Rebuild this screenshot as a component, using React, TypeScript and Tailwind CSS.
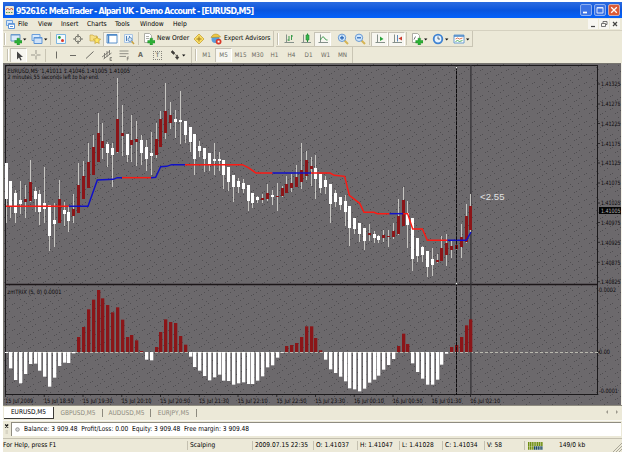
import type { ReactNode } from "react"
import clsx from "clsx"

// [high, body top, body bottom, low, 1 = up bar], in thirds of a pixel below y = 60
const candles = [
    [310, 310, 418, 490, 0], [362, 362, 438, 473, 0], [390, 400, 458, 488, 0], [362, 420, 432, 463, 0],
    [375, 417, 427, 475, 1], [300, 365, 423, 426, 1], [380, 393, 416, 455, 0], [390, 403, 456, 496, 0],
    [322, 430, 447, 490, 0], [435, 435, 527, 574, 0], [428, 480, 492, 560, 0], [360, 417, 488, 488, 1],
    [427, 450, 461, 498, 0], [437, 456, 482, 517, 0], [403, 447, 468, 490, 1], [308, 375, 460, 460, 1],
    [303, 348, 418, 418, 1], [250, 305, 384, 384, 1], [226, 262, 345, 345, 1], [158, 219, 305, 305, 1],
    [190, 244, 263, 297, 1], [247, 252, 280, 320, 0], [250, 264, 284, 380, 0], [53, 177, 276, 278, 1],
    [136, 218, 228, 287, 1], [222, 222, 285, 306, 0], [165, 240, 255, 306, 1], [182, 237, 247, 317, 1],
    [225, 241, 278, 316, 0], [240, 260, 296, 332, 0], [215, 278, 288, 344, 0], [190, 236, 285, 295, 1],
    [153, 178, 261, 261, 1], [68, 153, 219, 238, 1], [126, 165, 188, 206, 1], [150, 176, 187, 235, 0],
    [93, 180, 187, 251, 0], [184, 184, 224, 248, 0], [202, 202, 245, 275, 0], [221, 221, 297, 346, 0],
    [243, 258, 273, 291, 0], [264, 264, 297, 335, 0], [280, 280, 313, 332, 0], [248, 296, 302, 345, 0],
    [276, 298, 303, 332, 0], [300, 300, 345, 386, 0], [320, 320, 366, 392, 0], [344, 344, 381, 425, 0],
    [355, 362, 381, 400, 0], [358, 370, 386, 400, 0], [376, 376, 422, 452, 0], [398, 398, 428, 445, 0],
    [408, 412, 420, 430, 0], [403, 413, 419, 428, 1], [373, 399, 417, 422, 1], [390, 406, 412, 434, 0],
    [370, 407, 411, 453, 1], [378, 384, 409, 410, 1], [347, 372, 398, 400, 1], [342, 370, 384, 395, 1],
    [316, 351, 381, 382, 1], [250, 330, 366, 386, 1], [274, 300, 348, 360, 1], [291, 319, 327, 378, 1],
    [286, 323, 356, 417, 0], [342, 342, 384, 398, 0], [347, 360, 381, 403, 0], [371, 371, 431, 488, 0],
    [390, 400, 426, 440, 0], [410, 412, 434, 450, 0], [405, 423, 457, 498, 0], [439, 439, 504, 557, 0],
    [473, 473, 508, 523, 0], [489, 489, 522, 545, 0], [504, 504, 543, 570, 0], [492, 519, 525, 542, 1],
    [513, 522, 534, 550, 0], [525, 528, 540, 548, 0], [511, 525, 534, 545, 1], [510, 527, 530, 560, 1],
    [490, 513, 530, 536, 1], [417, 468, 522, 524, 1], [382, 421, 497, 497, 1], [423, 460, 494, 563, 0],
    [474, 474, 596, 632, 0], [534, 534, 588, 606, 0], [558, 560, 585, 605, 0], [573, 573, 620, 652, 0],
    [565, 597, 615, 648, 0], [581, 600, 606, 609, 1], [528, 564, 603, 604, 1], [521, 550, 584, 619, 1],
    [543, 558, 570, 594, 1], [540, 554, 566, 579, 1], [492, 531, 560, 594, 1], [433, 468, 545, 550, 1],
    [403, 438, 510, 516, 1],
]

const trix = [
    -3, -49, -84, -94, -66, -36, -35, -56, -74, -104, -77, -42, -32, -33, -4, 45, 75, 128, 157, 186,
    161, 141, 119, 134, 97, 45, 51, 35, 3, -23, -25, 15, 60, 98, 90, 87, 48, 22, -14, -45,
    -56, -72, -85, -76, -68, -86, -87, -98, -94, -91, -96, -96, -86, -73, -46, -40, -17, -2, 18, 21,
    27, 45, 77, 77, 42, 5, -23, -52, -63, -74, -88, -109, -112, -118, -110, -92, -83, -71, -53, -39,
    -21, 18, 55, 24, -34, -60, -80, -98, -98, -83, -38, -5, 15, 21, 45, 80, 98,
]

const trend = [
    { color: "#1010c8", points: "206,439 264,439 292,360 340,358 352,353 366,353" },
    { color: "#1010c8", points: "453,353 467,352 482,320 500,319 515,314 555,314" },
    { color: "#1010c8", points: "817,339 933,339" },
    { color: "#1010c8", points: "1168,461 1210,461" },
    { color: "#1010c8", points: "1342,541 1399,541 1413,516" },
    { color: "#fb1a14", points: "18,439 206,439" },
    { color: "#fb1a14", points: "366,353 453,353" },
    { color: "#fb1a14", points: "555,314 727,314 745,323 768,339 817,339" },
    { color: "#fb1a14", points: "933,339 990,339 1003,346 1034,349 1048,406 1079,430 1092,457 1122,457 1132,461 1168,461" },
    { color: "#fb1a14", points: "1210,461 1223,461 1238,507 1267,507 1282,541 1342,541" },
]

const prices = [
    ["1.41325", 84], ["1.41275", 104], ["1.41225", 123.5], ["1.41175", 143.5], ["1.41125", 163], ["1.41075", 183],
    ["1.41025", 203], ["1.40975", 222.5], ["1.40925", 242.3], ["1.40875", 262.3], ["1.40825", 281.7],
] as const

const times = [
    "15 Jul 2009", "15 Jul 18:50", "15 Jul 19:30", "15 Jul 20:10", "15 Jul 20:50", "15 Jul 21:30", "15 Jul 22:10",
    "15 Jul 22:50", "15 Jul 23:30", "16 Jul 00:10", "16 Jul 00:50", "16 Jul 01:30", "16 Jul 02:10",
]

const dots = [
    [2, 10], [4, 9], [7, 7], [12, 5], [14, 4], [9, 12], [17, 9], [19, 8], [22, 6], [24, 2], [6, 1], [20, 0], [0, 4],
]

const barX = (i: number) => 6 + i * 4.843

type LabelProps = { x: number, y: number, width: number, size?: number, fill?: string, children: ReactNode }

function Label({ x, y, width, size = 6, fill, children }: LabelProps) {
    return <text x={x} y={y} textLength={width} lengthAdjust="spacingAndGlyphs" fontSize={size} fill={fill}>{children}</text>
}

function Chart() {
    return (
        <svg width="619" height="342" viewBox="3 63 619 342" className="block shrink-0" fontFamily="'DejaVu Sans Condensed', 'DejaVu Sans', sans-serif">
            <defs>
                <pattern id="grain" width="26" height="13" patternUnits="userSpaceOnUse">
                    <rect width="26" height="13" fill="#6c696c" />
                    {dots.map(([x, y]) => <rect key={`${x}-${y}`} x={x} y={y} width="1" height="1" fill="#504e51" />)}
                </pattern>
            </defs>
            <rect x="3" y="63" width="618" height="342" fill="#9a988f" />
            <rect x="4" y="64" width="617" height="341" fill="url(#grain)" />
            <rect x="621" y="63" width="1" height="342" fill="#f4f2e8" />
            <path d="M3 63.5H621M3.5 63V405" stroke="#77756f" />
            <path d="M5 65.5H598M5.5 65V395M597.5 65V395M5 394.5H598" stroke="#1c1a1c" fill="none" />
            <path d="M5 284.6H598" stroke="#1c1719" strokeWidth="1.5" />

            <path d="M5 352.5H598" stroke="#b9b8ae" strokeDasharray="3 2" />
            <path d="M470.9 65V395" stroke="#353336" strokeWidth="1.3" />

            <g shapeRendering="crispEdges">
                {candles.map(([high, top, bottom, low, up], i) => (
                    <g key={i}>
                        <rect x={Math.round(barX(i) - 0.5)} y={60 + high / 3} width="1" height={(low - high) / 3} fill="#c6c5c1" />
                        <rect x={Math.round(barX(i) - 1.5)} y={60 + top / 3} width="3" height={Math.max(1, (bottom - top) / 3)} fill={up ? "#8b1518" : "#ffffff"} />
                    </g>
                ))}
            </g>

            <g>
                {trix.map((v, i) => (
                    <rect key={i} x={Math.round(barX(i) - 1.5)} y={v > 0 ? 352 - v / 3 : 352} width="3.3" height={Math.abs(v) / 3} fill={v > 0 ? "#8b1518" : "#ffffff"} />
                ))}
            </g>

            <g transform="translate(0 60) scale(0.33333)" fill="none" strokeWidth="4.4">
                {trend.map((t) => <polyline key={t.points} points={t.points} stroke={t.color} />)}
            </g>

            <path d="M456.5 66V395" stroke="#0c0a0c" strokeDasharray="4 0.6" />
            <path d="M455.5 66.5h2v2h-2zM455.5 282.5h2v2h-2z" fill="#ffffff" stroke="#222" strokeWidth="0.5" />

            <text x="480" y="199.8" fontSize="9.5" fontFamily="'Liberation Sans', sans-serif" fill="#e2e2e2" textLength="24.5">&lt;2.55</text>

            <g fill="#0d0b0d">
                <Label x={7.5} y={73} width={122.5}>EURUSD,M5&nbsp; 1.41011 1.41046 1.41005 1.41005</Label>
                <Label x={7.5} y={79.2} width={90.5}>2 minutes 55 seconds left to bar end</Label>
                <Label x={7.5} y={293.8} width={54}>zmTRIX (5, 0) 0.0001</Label>
                {prices.map(([label, y]) => (
                    <g key={label}>
                        <path d={`M598 ${y}h2`} stroke="#1c1a1c" strokeWidth="0.8" />
                        <Label x={601} y={y + 2.2} width={19.5}>{label}</Label>
                    </g>
                ))}
                <rect x="599" y="207" width="22" height="7" fill="#050505" />
                <Label x={601} y={212.8} width={19.5} fill="#b5b3b5">1.41005</Label>
                <Label x={599} y={292.3} width={17}>0.0002</Label>
                <path d="M598 352h2" stroke="#111" />
                <Label x={599} y={354.2} width={11}>0.00</Label>
                <Label x={599} y={393} width={19}>-0.0001</Label>
                {times.map((label, i) => (
                    <g key={label}>
                        <path d={`M${5.5 + i * 38.75} 394v3`} stroke="#1c1a1c" strokeWidth="0.8" />
                        <Label x={5.2 + i * 38.75} y={402.5} width={i ? 30 : 28}>{label}</Label>
                    </g>
                ))}
            </g>
        </svg>
    )
}

function Icon({ children }: { children: ReactNode }) {
    return <svg width="12" height="12" viewBox="0 0 12 12" fill="none" className="shrink-0">{children}</svg>
}

function Slot({ pressed, children }: { pressed?: boolean, children: ReactNode }) {
    return (
        <div className={clsx("flex h-[14px] w-[17px] shrink-0 items-center justify-center", pressed && "border-x border-t border-[#c6c3b6] border-r-white bg-[#f7f6f0]")}>
            {children}
        </div>
    )
}

function Arrow() {
    return <svg width="5" height="12" viewBox="0 0 5 12" className="shrink-0"><path d="M1 5.5h3.4L2.7 7.6z" fill="#111" /></svg>
}

function Sep() {
    return <div className="mx-px h-[13px] w-px shrink-0 bg-[#c9c5b4]" />
}

function Grip() {
    return <div className="mx-px h-[12px] w-[2px] shrink-0 border-l border-[#c4c0b0] bg-white" />
}

function Plus() {
    return <path d="M7 5.2h2.6V7.5H12v2.6H9.600V12H7v-1.9H4.700V7.5H7z" fill="#2cb035" stroke="#1b8424" strokeWidth="0.4" />
}

function Axes() {
    return <path d="M3.5 1.5V9.5M1.5 9.5H11" stroke="#85908a" />
}

function Lens({ minus }: { minus?: boolean }) {
    return (
        <Icon>
            <path d="M7.5 7.5l3.5 3.5" stroke="#d6b453" strokeWidth="2" />
            <circle cx="5" cy="4.8" r="3.7" fill="#cfe6fb" stroke="#6a9ad2" />
            <path d={minus ? "M3 4.8h4" : "M3 4.8h4M5 2.8v4"} stroke="#2463b5" strokeWidth="1.2" />
        </Icon>
    )
}

function TitleBar() {
    return (
        <div className="flex h-4 shrink-0 items-center bg-gradient-to-b from-[#2a6be0] via-[#0a55dd] to-[#0462fb] pl-[2px] pr-[2px]">
            <svg width="9" height="9" viewBox="0 0 9 9" className="shrink-0">
                <rect width="9" height="9" rx="1" fill="#efe7d4" />
                <path d="M1 4l1.5-2L4.5 4l2-2L8 4" stroke="#cf4a35" fill="none" />
                <path d="M1 6.5h7" stroke="#4d9b5b" strokeDasharray="1.5 1" />
            </svg>
            <svg width="242" height="14" className="ml-[2px] shrink-0">
                <text x="0" y="10.6" textLength="238" fontSize="8.8" fontWeight="700" fill="#fff" fontFamily="'DejaVu Sans Condensed', 'DejaVu Sans', sans-serif">952616: MetaTrader - Alpari UK - Demo Account - [EURUSD,M5]</text>
            </svg>
            <div className="ml-auto flex gap-[2px]">
                <svg width="12" height="12" viewBox="0 0 12 12"><rect x="0.5" y="0.5" width="11" height="11" rx="1.5" fill="#3c73e4" stroke="#b9cdf5" strokeWidth="0.7" /><path d="M3 8.5h4" stroke="#fff" strokeWidth="1.7" /></svg>
                <svg width="12" height="12" viewBox="0 0 12 12"><rect x="0.5" y="0.5" width="11" height="11" rx="1.5" fill="#3c73e4" stroke="#b9cdf5" strokeWidth="0.7" /><path d="M3 3.5h6v5.5H3zM3 4h6" fill="none" stroke="#dfe9fc" /></svg>
                <svg width="12" height="12" viewBox="0 0 12 12"><rect x="0.5" y="0.5" width="11" height="11" rx="1.5" fill="#dd5a35" stroke="#f3cfc1" strokeWidth="0.7" /><path d="M3.2 3.2l5.6 5.6M8.8 3.2L3.2 8.8" stroke="#fff" strokeWidth="1.3" /></svg>
            </div>
        </div>
    )
}

function MenuBar() {
    return (
        <div className="flex h-[13px] shrink-0 items-center border-b border-[#d5d1c0] pl-[3px] text-[6.7px]">
            <svg width="9" height="9" viewBox="0 0 9 9" className="shrink-0">
                <path d="M0.5 0.5h6v5h-6z" fill="#d7e8fb" stroke="#6ea0dc" />
                <path d="M2.5 3.5h6v5h-6z" fill="#fff" stroke="#5f95d8" />
                <path d="M2.5 4.3h6M4 6.5h3" stroke="#5f95d8" />
            </svg>
            <span className="ml-[3px] w-5">File</span>
            <span className="w-[23px]">View</span>
            <span className="w-[26px]">Insert</span>
            <span className="w-7">Charts</span>
            <span className="w-[25px]">Tools</span>
            <span className="w-[33px]">Window</span>
            <span>Help</span>
            <div className="ml-auto mr-[2px] flex gap-px">
                <svg width="10" height="10" viewBox="0 0 10 10"><rect width="10" height="10" fill="#f7f6f1" /><path d="M3 7.5h4" stroke="#444" strokeWidth="1.2" /></svg>
                <svg width="10" height="10" viewBox="0 0 10 10"><rect width="10" height="10" fill="#f7f6f1" /><path d="M4 4V2.5h4v3H6.8M2.5 4.5h4v3h-4z" stroke="#555" fill="none" strokeWidth="0.8" /></svg>
                <svg width="10" height="10" viewBox="0 0 10 10"><rect width="10" height="10" fill="#f7f6f1" /><path d="M3 3l4 4M7 3L3 7" stroke="#444" strokeWidth="1.2" /></svg>
            </div>
        </div>
    )
}

function MainToolbar() {
    return (
        <div className="flex h-4 shrink-0 items-center">
            <div className="flex h-full items-center border-b border-r border-[#c9c5b4] text-[6.7px]">
                <Grip />
                <div className="flex w-[21px] items-center pl-[3px]">
                    <Icon><path d="M1 1.5h9v6.500H1z" fill="#dcebfa" stroke="#6b9acb" /><path d="M1 2h9" stroke="#6b9acb" /><Plus /></Icon>
                    <Arrow />
                </div>
                <div className="flex w-[21px] items-center pl-[3px]">
                    <Icon><path d="M1 1.500h8v6H1z" fill="#d9eafc" stroke="#6b9fdc" /><path d="M3 4.500h8v6H3z" fill="#cfe2f8" stroke="#5c94d6" /><path d="M3 5h8" stroke="#5c94d6" /></Icon>
                    <Arrow />
                </div>
                <Sep />
                <Slot><Icon><path d="M1.5 1.5h9v9h-9z" fill="#f3f8fd" stroke="#7db6e0" /><circle cx="4.4" cy="4.5" r="1.4" fill="#27a03a" /><circle cx="7.5" cy="7.5" r="1.5" fill="#d93a2c" /></Icon></Slot>
                <Slot><Icon><circle cx="6" cy="6" r="3" stroke="#77776e" /><path d="M6 1v3.5M6 7.5V11M1 6h3.5M7.5 6H11" stroke="#77776e" strokeWidth="1.2" /></Icon></Slot>
                <Slot><Icon><path d="M1 2h3l1 1h3v5H1z" fill="#f7df82" stroke="#c9ab4c" strokeWidth="0.7" /><path d="M8 3.5l1.1 2.300 2.500.3-1.800 1.800.4 2.600L8 9.300l-2.200 1.200.4-2.600-1.800-1.800 2.500-.3z" fill="#ffe763" stroke="#c29d30" strokeWidth="0.7" /></Icon></Slot>
                <Slot pressed><Icon><path d="M1 1.5h10v8.5H1z" fill="#fff" stroke="#5a91cb" /><path d="M1 2h10M2.5 2v8" stroke="#4a86c8" strokeWidth="1.5" /></Icon></Slot>
                <Slot><Icon><path d="M1.5 1.5h8v8h-8z" fill="#eaf3fc" stroke="#a9c5e2" /><path d="M3.5 3v5M6.5 3v3" stroke="#4a7eb8" /><circle cx="7" cy="6.5" r="2" fill="#cfe3f7" stroke="#5b87b5" strokeWidth="0.8" /><path d="M8.6 8.2L11 11" stroke="#c9a23c" strokeWidth="1.5" /></Icon></Slot>
                <Sep />
                <Slot><Icon><path d="M1.5 0.5h5l2 2v7h-7z" fill="#fff" stroke="#9c9c94" strokeWidth="0.8" /><path d="M3 3.5h3M3 5.5h3" stroke="#8c8c84" strokeWidth="0.7" /><Plus /></Icon></Slot>
                <span className="w-[33px] whitespace-nowrap">New Order</span>
                <Slot><Icon><path d="M6 1l5 5-5 5-5-5z" fill="#fbdf66" stroke="#c7a235" strokeWidth="0.8" /><path d="M6 3.5v5M3.5 6h5" stroke="#9d7a1c" /></Icon></Slot>
                <Slot><Icon><circle cx="5.5" cy="6" r="4" fill="#5aa0dd" /><path d="M1 4.5C3 0 8 0 10.5 4z" fill="#f0c945" stroke="#a78419" strokeWidth="0.5" /><circle cx="8.6" cy="8.6" r="2.9" fill="#d8382a" /><path d="M7.6 7.6h2v2h-2z" fill="#fff" /></Icon></Slot>
                <span className="w-[49px] whitespace-nowrap text-[6.6px]">Expert Advisors</span>
            </div>
            <div className="ml-[2px] flex h-full items-center border-b border-r border-[#c9c5b4]">
                <Grip />
                <Slot><Icon><Axes /><path d="M6 3v5M4.5 7H6M8.5 2v5M8.5 3H10" stroke="#3a9a4b" /></Icon></Slot>
                <Slot><Icon><Axes /><path d="M7.5 0.5V9" stroke="#258b37" /><path d="M6 2h3v5H6z" fill="#36b54a" stroke="#258b37" strokeWidth="0.6" /></Icon></Slot>
                <Slot pressed><Icon><Axes /><path d="M3.5 7c1-3 3-4 4-2s2 2 3 2" stroke="#3a9a4b" /></Icon></Slot>
                <div className="w-[3px]" />
                <Slot><Lens /></Slot>
                <Slot><Lens minus /></Slot>
                <Sep />
                <Slot pressed><Icon><Axes /><path d="M6 3.5L9.5 6 6 8z" fill="#2aa33b" /></Icon></Slot>
                <Slot pressed><Icon><Axes /><path d="M6.5 2v6.5" stroke="#5b86bb" /><path d="M11 3.5v4L7.5 5.5z" fill="#cc3b2d" /></Icon></Slot>
                <Sep />
                <div className="flex w-[21px] items-center pl-[3px]">
                    <Icon><path d="M1.5 0.5h5l2 2v7h-7z" fill="#fff" stroke="#9c9c94" strokeWidth="0.8" /><path d="M3 6.5l1.5-3" stroke="#777" /><Plus /></Icon>
                    <Arrow />
                </div>
                <div className="flex w-[21px] items-center pl-[3px]">
                    <Icon><circle cx="6" cy="6" r="4.3" fill="#e6f2fd" stroke="#3f83d2" strokeWidth="1.8" /><path d="M6 3.5V6h2" stroke="#345" strokeWidth="0.8" /></Icon>
                    <Arrow />
                </div>
                <div className="flex w-[22px] items-center pl-[3px]">
                    <Icon><path d="M1 2h10v8H1z" fill="#fff" stroke="#6a9dd2" /><path d="M1 3h10" stroke="#4583c4" strokeWidth="1.5" /><path d="M2.5 6l2-1 2 1 3-1" stroke="#d5592f" strokeWidth="0.8" /><path d="M2.5 8.5l2-1 2 1 3-1" stroke="#2c9a3e" strokeWidth="0.8" /></Icon>
                    <Arrow />
                </div>
            </div>
        </div>
    )
}

function DrawToolbar() {
    return (
        <div className="flex h-4 shrink-0 items-center">
            <div className="flex h-full items-center border-r border-[#c9c5b4] pl-[3px]">
                <Grip />
                <Slot pressed><Icon><path d="M4 1.5v8l2-2 1.5 3 1.2-.6-1.4-2.8H10z" fill="#444" /></Icon></Slot>
                <Slot><Icon><path d="M6 1v10M1 6h10" stroke="#99978d" strokeDasharray="4 1.5 4" /></Icon></Slot>
                <Sep />
                <Slot><Icon><path d="M6.5 2.5v7" stroke="#6c6b64" /></Icon></Slot>
                <Slot><Icon><path d="M3 6.5h6" stroke="#6c6b64" /></Icon></Slot>
                <Slot><Icon><path d="M2 9.5l7.5-7" stroke="#6c6b64" /></Icon></Slot>
                <Slot><Icon><path d="M1 8l8-6M2.5 10l8-6M3.5 4v5.5M6 2v6M8.5 1v5" stroke="#6c6b64" strokeWidth="0.8" /><path d="M11 8.5H9v3h2M9 10h1.6" stroke="#5c5b55" strokeWidth="0.6" /></Icon></Slot>
                <Slot><Icon><path d="M1.5 2h9M1.5 4.7h9M1.5 7.4h6.5" stroke="#85837a" strokeWidth="0.9" /><path d="M11 8H9.3v3.5M9.3 9.7h1.4" stroke="#5c5b55" strokeWidth="0.6" /></Icon></Slot>
                <Slot><span className="text-[7px] font-bold text-[#66655d]">A</span></Slot>
                <Slot><span className="flex h-[9px] w-[9px] items-center justify-center border border-dotted border-[#85837a] text-[6px] text-[#4a4943]">T</span></Slot>
                <div className="flex w-[25px] items-center pl-[3px]">
                    <Icon><path d="M3.500 1.500l2.500 2.500-1.500 1.500L2 3zM5.500 5l2 1.500M8.500 6v2h1.500L8.200 10.500 6.300 8h1.300V6z" fill="#3e3d38" stroke="#3e3d38" strokeWidth="0.500" /></Icon>
                    <Arrow />
                </div>
            </div>
            <div className="flex h-full items-center border-r border-[#c9c5b4] pl-[2px] pr-px text-[6.3px] text-[#6a6860]">
                <Grip />
                {["M1", "M5", "M15", "M30", "H1", "H4", "D1", "W1", "MN"].map((tf) => (
                    <Slot key={tf} pressed={tf === "M5"}>{tf}</Slot>
                ))}
            </div>
        </div>
    )
}

function Tabs() {
    return (
        <div className="flex h-[15px] shrink-0 items-start border-t border-[#8f8c80] pl-px pt-px text-[6.5px] text-[#8d8a7e]">
            <div className="flex h-[12px] w-[50px] items-center justify-center border-b border-r border-[#3c3b37] bg-white text-black">EURUSD,M5</div>
            <div className="my-[2px] flex h-2 w-[49px] items-center justify-center border-r border-[#8d8a7e]">GBPUSD,M5</div>
            <div className="my-[2px] flex h-2 w-[48px] items-center justify-center border-r border-[#8d8a7e]">AUDUSD,M5</div>
            <div className="my-[2px] flex h-2 w-[46px] items-center justify-center border-r border-[#8d8a7e]">EURJPY,M5</div>
            <svg width="18" height="10" viewBox="0 0 18 10" className="ml-auto"><path d="M4 3v4L2 5zM12 3v4l2-2z" fill="#9b988c" /></svg>
        </div>
    )
}

function Terminal() {
    return (
        <div className="flex h-4 shrink-0 items-center border-t border-[#f8f7f2] pr-px">
            <svg width="8" height="14" viewBox="0 0 8 14" className="shrink-0"><path d="M2.2 2.5l3 3M5.2 2.5l-3 3" stroke="#111" strokeWidth="1.2" /><path d="M2.5 9h2.5M2.5 11h2.5" stroke="#c4c0b0" /></svg>
            <div className="flex h-[14px] flex-1 items-center border-l border-t border-[#8f8c80] bg-white pl-[3px]">
                <svg width="5" height="5" viewBox="0 0 5 5" className="mr-[4px]"><circle cx="2.5" cy="2.5" r="1.8" fill="#d8d8d8" stroke="#888" strokeWidth="0.8" /></svg>
                <svg width="240" height="12"><Label x={0} y={8.3} width={225} size={6.8}>Balance: 3 909.48&nbsp; Profit/Loss: 0.00&nbsp; Equity: 3 909.48&nbsp; Free margin: 3 909.48</Label></svg>
            </div>
        </div>
    )
}

function StatusBar() {
    return (
        <div className="flex h-[14px] shrink-0 items-center border-t border-[#c4c0b0] text-[6.6px] [&>span]:flex [&>span]:h-[9px] [&>span]:items-center [&>span]:whitespace-nowrap">
            <span className="w-[184px]">For Help, press F1</span>
            <span className="w-[65px] border-l border-[#c4c0b0] pl-[2px]">Scalping</span>
            <span className="w-[61px] border-l border-[#c4c0b0] pl-[2px]">2009.07.15 22:35</span>
            <span className="w-[44px] border-l border-[#c4c0b0] pl-[2px]">O: 1.41037</span>
            <span className="w-[42px] border-l border-[#c4c0b0] pl-[2px]">H: 1.41047</span>
            <span className="w-[43px] border-l border-[#c4c0b0] pl-[2px]">L: 1.41028</span>
            <span className="w-[42px] border-l border-[#c4c0b0] pl-[2px]">C: 1.41034</span>
            <span className="w-[40px] border-l border-[#c4c0b0] pl-[2px]">V: 58</span>
            <span className="w-[35px] border-l border-[#c4c0b0] pl-[3px]">
                <svg width="15" height="8" viewBox="0 0 15 8"><path d="M0 2h15" stroke="#6f8f12" strokeWidth="4" strokeDasharray="1.3 0.5" /><path d="M0 6h6" stroke="#6f8f12" strokeWidth="3.5" strokeDasharray="1.3 0.5" /><path d="M6 6h9" stroke="#1d4a66" strokeWidth="3.5" strokeDasharray="1.3 0.5" /></svg>
            </span>
            <span>149/0 kb</span>
            <svg width="10" height="10" viewBox="0 0 10 10" className="ml-auto self-end"><path d="M1 10l9-9M4 10l6-6M7 10l3-3" stroke="#aaa798" /></svg>
        </div>
    )
}

function App() {
    return (
        <div className="h-[452px] w-[625px] overflow-hidden bg-white pl-[3px] pr-[3px] pt-[2px] font-['DejaVu_Sans_Condensed','DejaVu_Sans',sans-serif] leading-none text-black">
            <div className="flex h-[450px] flex-col bg-[#ece9d8]">
                <TitleBar />
                <MenuBar />
                <MainToolbar />
                <DrawToolbar />
                <Chart />
                <Tabs />
                <Terminal />
                <div className="h-[2px] shrink-0" />
                <StatusBar />
                <div className="flex h-[2px] shrink-0 bg-[#2f73e0]">
                    <div className="w-[57px] rounded-r-sm bg-[#3f9a41]" />
                    <div className="ml-auto w-[66px] bg-[#17a0ee]" />
                </div>
            </div>
        </div>
    )
}

export default App
